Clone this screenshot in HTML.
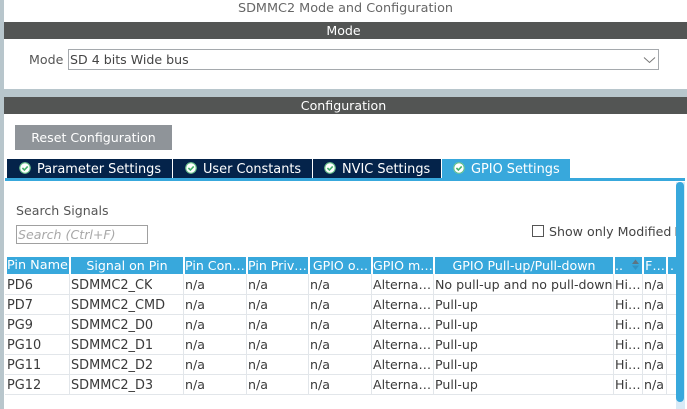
<!DOCTYPE html>
<html>
<head>
<meta charset="utf-8">
<style>
html,body{margin:0;padding:0;background:#fff}
#p{position:relative;width:687px;height:409px;overflow:hidden;background:#fff;font-family:"DejaVu Sans",sans-serif;font-size:12.6px;color:#444}
#p div{position:absolute;white-space:nowrap;box-sizing:border-box}
#p svg{position:absolute}
.band{left:4px;width:683px;height:17px;background:#535554;color:#fff;text-align:center;line-height:18px;padding-right:4px}
.tab{top:159px;height:19px;background:#04234a;color:#fff;line-height:21px;font-size:12.9px}
.h{top:257px;height:17px;background:#38a8dc;color:#fff;line-height:17px;text-align:center;overflow:hidden}
.l{text-align:left!important;padding-left:0}
.c{height:20px;line-height:20px;color:#3a3a3a;overflow:hidden}
.c[style*="left:71px"],.c[style*="left:7px"]{font-size:12.9px;line-height:21px}
.vl{top:274px;height:120px;width:1px;background:#e2e6ea}
.hl{left:5px;width:671px;height:1px;background:#e2e6ea}
</style>
</head>
<body>
<div id="p">
<div style="left:0;top:0;width:4px;height:409px;background:#b8c6cc"></div>
<div style="left:0;top:89px;width:687px;height:8px;background:#b8c6cc"></div>
<div style="left:4px;top:0;width:683px;height:22px;line-height:18px;text-align:center;color:#666;font-size:12.8px">SDMMC2 Mode and Configuration</div>
<div class="band" style="top:22px">Mode</div>
<div style="left:29px;top:50px;line-height:19px;color:#555">Mode</div>
<div style="left:68px;top:49px;width:591px;height:21px;border:1px solid #a5a9ad;line-height:19px;padding-left:1px;color:#444">SD 4 bits Wide bus</div>
<svg style="left:643px;top:56px" width="13" height="8" viewBox="0 0 13 8"><path d="M1 1.5L6.5 6.5L12 1.5" fill="none" stroke="#777" stroke-width="1"/></svg>
<div class="band" style="top:97px">Configuration</div>
<div style="left:15px;top:125px;width:157px;height:25px;background:#8f9499;color:#fff;text-align:center;line-height:26px">Reset Configuration</div>

<div class="tab" style="left:7px;width:165px;padding-left:30px">Parameter Settings</div>
<div class="tab" style="left:173px;width:139px;padding-left:30px">User Constants</div>
<div class="tab" style="left:313px;width:128px;padding-left:29px">NVIC Settings</div>
<div class="tab" style="left:442px;width:128px;height:19px;background:#38a8dc;padding-left:29px">GPIO Settings</div>
<div style="left:5px;top:178px;width:680px;height:3px;background:#38a8dc"></div>
<svg style="left:19px;top:162px" width="12" height="12" viewBox="0 0 12 12"><circle cx="6" cy="6" r="5.7" fill="#fff"/><circle cx="6" cy="6" r="5.2" fill="none" stroke="#5cbf80" stroke-width="1"/><path d="M3.4 6L5.4 8L8.7 4.4" fill="none" stroke="#45b36b" stroke-width="1.6"/></svg>
<svg style="left:185px;top:162px" width="12" height="12" viewBox="0 0 12 12"><circle cx="6" cy="6" r="5.7" fill="#fff"/><circle cx="6" cy="6" r="5.2" fill="none" stroke="#5cbf80" stroke-width="1"/><path d="M3.4 6L5.4 8L8.7 4.4" fill="none" stroke="#45b36b" stroke-width="1.6"/></svg>
<svg style="left:324px;top:162px" width="12" height="12" viewBox="0 0 12 12"><circle cx="6" cy="6" r="5.7" fill="#fff"/><circle cx="6" cy="6" r="5.2" fill="none" stroke="#5cbf80" stroke-width="1"/><path d="M3.4 6L5.4 8L8.7 4.4" fill="none" stroke="#45b36b" stroke-width="1.6"/></svg>
<svg style="left:453px;top:162px" width="12" height="12" viewBox="0 0 12 12"><circle cx="6" cy="6" r="5.7" fill="#fff"/><circle cx="6" cy="6" r="5.2" fill="none" stroke="#5cbf80" stroke-width="1"/><path d="M3.4 6L5.4 8L8.7 4.4" fill="none" stroke="#45b36b" stroke-width="1.6"/></svg>

<div style="left:16px;top:201px;line-height:19px;color:#555">Search Signals</div>
<div style="left:16px;top:225px;width:132px;height:19px;border:1px solid #a0a0a0;line-height:17px;padding-left:1px;color:#a8a8a8;font-style:italic">Search (Ctrl+F)</div>
<div style="left:532px;top:225px;width:12px;height:12px;border:1px solid #555"></div>
<div style="left:549px;top:222px;width:127px;overflow:hidden;line-height:19px;color:#444">Show only Modified <span style="margin-left:-1px">Pins</span></div>

<div class="h l" style="left:7px;width:62px;font-size:12.8px;line-height:18px">Pin Name</div>
<div class="h" style="left:71px;width:112px">Signal on Pin</div>
<div class="h l" style="left:185px;width:61px">Pin Con…</div>
<div class="h l" style="left:248px;width:60px">Pin Priv…</div>
<div class="h" style="left:310px;width:61px">GPIO o…</div>
<div class="h l" style="left:373px;width:60px">GPIO m…</div>
<div class="h" style="left:435px;width:178px">GPIO Pull-up/Pull-down</div>
<div class="h l" style="left:615px;width:27px">..</div>
<svg style="left:631px;top:258px" width="9" height="13" viewBox="0 0 9 13"><path d="M1 6L4.5 1.5L8 6Z" fill="#5d7482"/><path d="M1 7.5L4.5 12L8 7.5Z" fill="#2f93c4"/></svg>
<div class="h" style="left:644px;width:22px">F…</div>
<div class="h" style="left:668px;width:8px">.</div>

<div class="hl" style="top:294px"></div>
<div class="hl" style="top:314px"></div>
<div class="hl" style="top:334px"></div>
<div class="hl" style="top:354px"></div>
<div class="hl" style="top:374px"></div>
<div class="hl" style="top:394px"></div>
<div class="vl" style="left:69px"></div>
<div class="vl" style="left:183px"></div>
<div class="vl" style="left:246px"></div>
<div class="vl" style="left:308px"></div>
<div class="vl" style="left:371px"></div>
<div class="vl" style="left:433px"></div>
<div class="vl" style="left:613px"></div>
<div class="vl" style="left:642px"></div>
<div class="vl" style="left:666px"></div>

<div class="c" style="left:7px;top:275px">PD6</div><div class="c" style="left:71px;top:275px">SDMMC2_CK</div><div class="c" style="left:185px;top:275px">n/a</div><div class="c" style="left:248px;top:275px">n/a</div><div class="c" style="left:310px;top:275px">n/a</div><div class="c" style="left:373px;top:275px">Alterna…</div><div class="c" style="left:435px;top:275px">No pull-up and no pull-down</div><div class="c" style="left:615px;top:275px">Hi…</div><div class="c" style="left:644px;top:275px">n/a</div>
<div class="c" style="left:7px;top:295px">PD7</div><div class="c" style="left:71px;top:295px">SDMMC2_CMD</div><div class="c" style="left:185px;top:295px">n/a</div><div class="c" style="left:248px;top:295px">n/a</div><div class="c" style="left:310px;top:295px">n/a</div><div class="c" style="left:373px;top:295px">Alterna…</div><div class="c" style="left:435px;top:295px">Pull-up</div><div class="c" style="left:615px;top:295px">Hi…</div><div class="c" style="left:644px;top:295px">n/a</div>
<div class="c" style="left:7px;top:315px">PG9</div><div class="c" style="left:71px;top:315px">SDMMC2_D0</div><div class="c" style="left:185px;top:315px">n/a</div><div class="c" style="left:248px;top:315px">n/a</div><div class="c" style="left:310px;top:315px">n/a</div><div class="c" style="left:373px;top:315px">Alterna…</div><div class="c" style="left:435px;top:315px">Pull-up</div><div class="c" style="left:615px;top:315px">Hi…</div><div class="c" style="left:644px;top:315px">n/a</div>
<div class="c" style="left:7px;top:335px">PG10</div><div class="c" style="left:71px;top:335px">SDMMC2_D1</div><div class="c" style="left:185px;top:335px">n/a</div><div class="c" style="left:248px;top:335px">n/a</div><div class="c" style="left:310px;top:335px">n/a</div><div class="c" style="left:373px;top:335px">Alterna…</div><div class="c" style="left:435px;top:335px">Pull-up</div><div class="c" style="left:615px;top:335px">Hi…</div><div class="c" style="left:644px;top:335px">n/a</div>
<div class="c" style="left:7px;top:355px">PG11</div><div class="c" style="left:71px;top:355px">SDMMC2_D2</div><div class="c" style="left:185px;top:355px">n/a</div><div class="c" style="left:248px;top:355px">n/a</div><div class="c" style="left:310px;top:355px">n/a</div><div class="c" style="left:373px;top:355px">Alterna…</div><div class="c" style="left:435px;top:355px">Pull-up</div><div class="c" style="left:615px;top:355px">Hi…</div><div class="c" style="left:644px;top:355px">n/a</div>
<div class="c" style="left:7px;top:375px">PG12</div><div class="c" style="left:71px;top:375px">SDMMC2_D3</div><div class="c" style="left:185px;top:375px">n/a</div><div class="c" style="left:248px;top:375px">n/a</div><div class="c" style="left:310px;top:375px">n/a</div><div class="c" style="left:373px;top:375px">Alterna…</div><div class="c" style="left:435px;top:375px">Pull-up</div><div class="c" style="left:615px;top:375px">Hi…</div><div class="c" style="left:644px;top:375px">n/a</div>

<div style="left:676px;top:182px;width:9px;height:227px;background:#d8eaf6"></div>
<div style="left:676px;top:182px;width:8px;height:220px;background:#38a8dc;border-radius:4px"></div>
</div>
</body>
</html>
